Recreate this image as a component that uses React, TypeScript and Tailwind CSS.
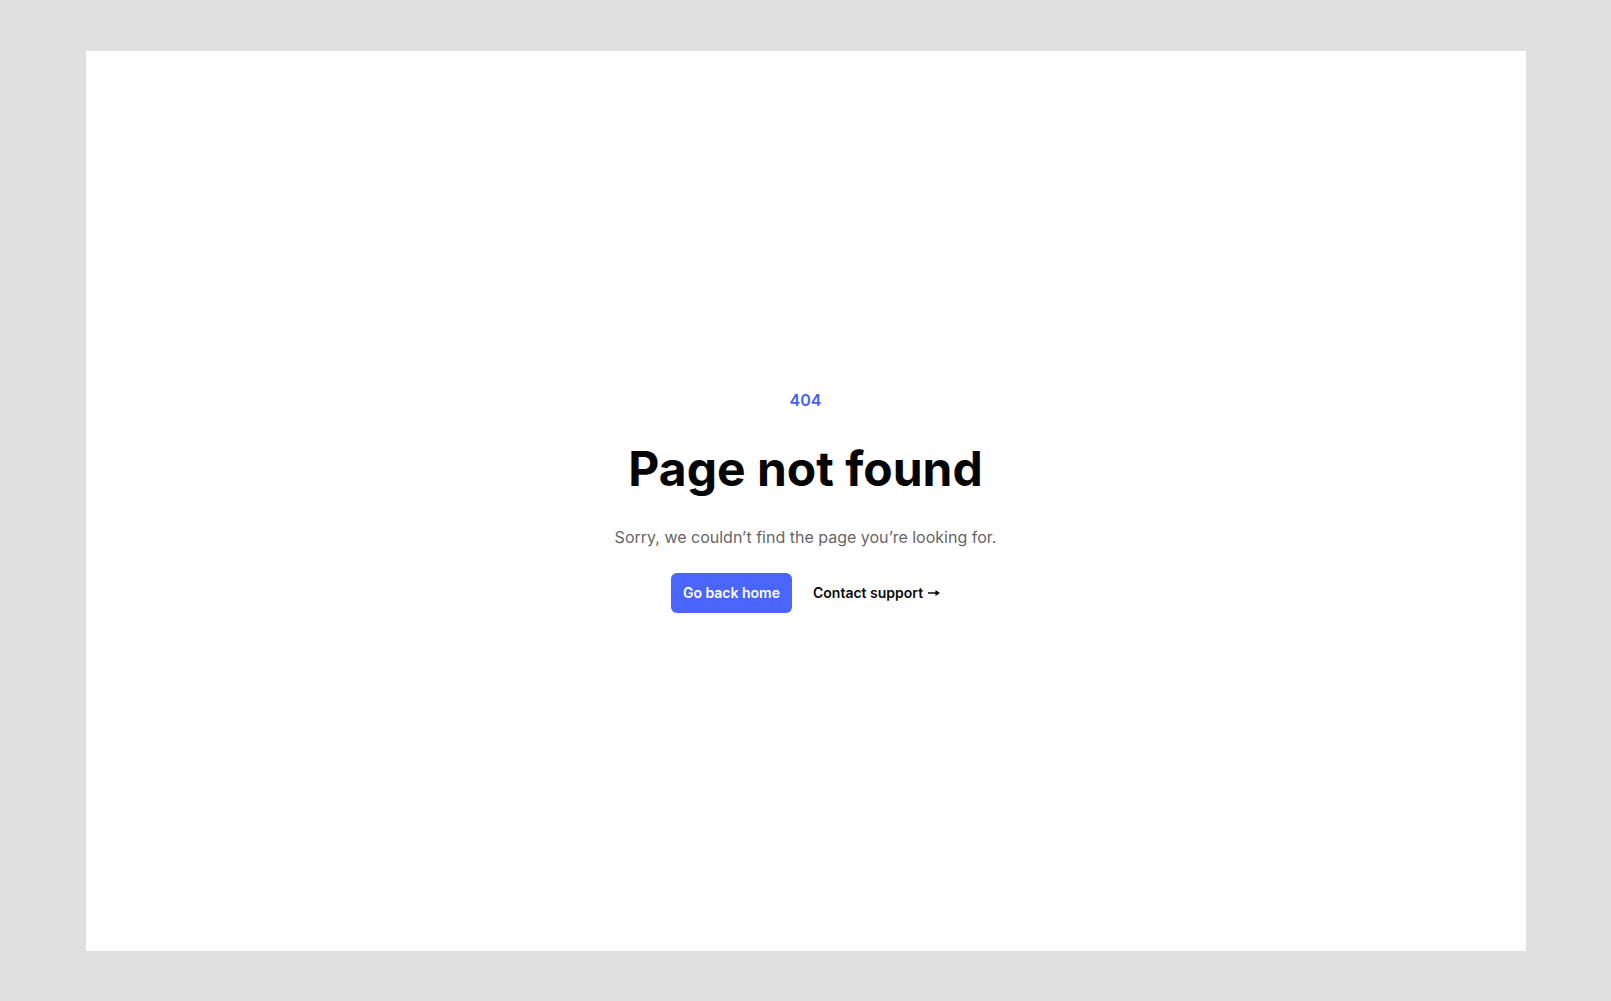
export default function App() {
  return (
    <div className="flex min-h-screen items-center justify-center bg-[#e0e0e0] font-['Inter',sans-serif]">
      <main className="flex h-[900px] w-[1440px] flex-col items-center justify-center bg-white text-center">
        <p className="text-base leading-6 font-semibold text-[#4761f2]">404</p>
        <h1 className="mt-[33px] text-[48px] leading-[48px] font-bold text-[#050505]">
          Page not found
        </h1>
        <p className="mt-[30px] text-base leading-7 text-[#666666]">
          Sorry, we couldn’t find the page you’re looking for.
        </p>
        <div className="mt-[22px] flex items-center justify-center gap-x-[21px]">
          <a
            href="#"
            className="rounded-md bg-[#4a65fb] px-3 py-2.5 text-sm leading-5 font-semibold text-white"
          >
            Go back home
          </a>
          <a href="#" className="flex items-center gap-[5px] text-sm leading-5 font-semibold text-[#0a0a0a]">
            Contact support
            <svg aria-hidden="true" width="12" height="8" viewBox="0 0 12 8" className="mt-[-1px]">
              <path d="M0 4h8" stroke="currentColor" strokeWidth="1.5" />
              <path d="M7.5 1L12 4L7.5 7Z" fill="currentColor" />
            </svg>
          </a>
        </div>
      </main>
    </div>
  );
}
